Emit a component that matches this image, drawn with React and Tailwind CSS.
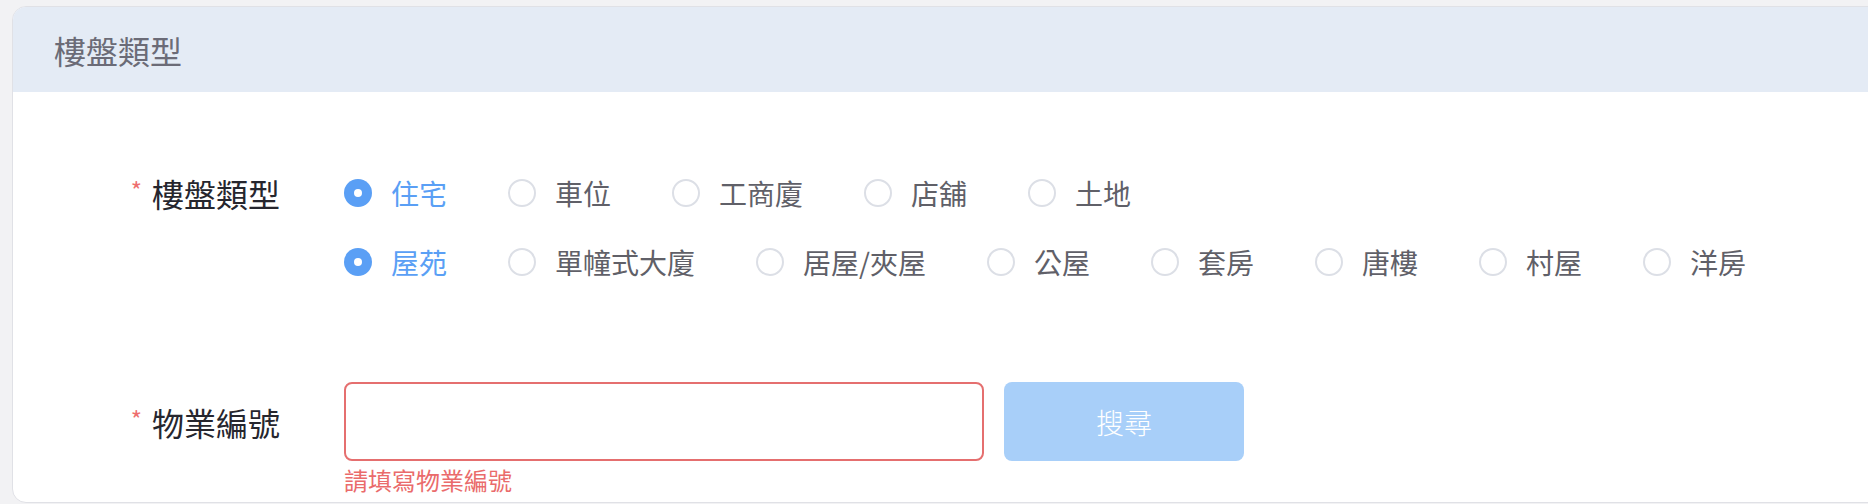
import React from "react";

const row1 = [
  { t: "住宅", c: true },
  { t: "車位" },
  { t: "工商廈" },
  { t: "店舖" },
  { t: "土地" },
];
const row2 = [
  { t: "屋苑", c: true },
  { t: "單幢式大廈" },
  { t: "居屋/夾屋" },
  { t: "公屋" },
  { t: "套房" },
  { t: "唐樓" },
  { t: "村屋" },
  { t: "洋房" },
];

function Radio({ t, c }) {
  return (
    <label className="flex items-center mr-[61px] cursor-pointer">
      {c ? (
        <span className="w-[28px] h-[28px] rounded-full bg-[#5a9ff5] flex items-center justify-center">
          <span className="w-[8px] h-[8px] rounded-full bg-white" />
        </span>
      ) : (
        <span className="w-[28px] h-[28px] rounded-full border-2 border-[#dcdfe6] bg-white" />
      )}
      <span
        className={
          "pl-[19px] text-[28px] leading-none " +
          (c ? "text-[#5a9ff5]" : "text-[#606068]")
        }
      >
        {t}
      </span>
    </label>
  );
}

export default function App() {
  return (
    <div
      className="w-[1868px] h-[504px] bg-[#f2f2f4] overflow-hidden pt-[6px] pl-[12px]"
      style={{ fontFamily: '"Noto Sans CJK TC", "Noto Sans", sans-serif' }}
    >
      <div className="w-[1900px] h-[497px] bg-white border-[1.5px] border-[#e0e1e6] rounded-[14px] overflow-hidden">
        <div className="h-[85px] bg-[#e4ebf5] flex items-center pl-[41px]">
          <span className="text-[32px] text-[#6b6b77] leading-none">樓盤類型</span>
        </div>
        <div className="pt-[66px]">
          <div className="flex">
            <div className="w-[331px] pr-[64px] flex justify-end h-[69px] items-center">
              <span className="text-[#ee6e6e] text-[24px] mr-[10px] leading-none mt-[-6px]">*</span>
              <span className="text-[32px] text-[#26262e] leading-none">樓盤類型</span>
            </div>
            <div className="flex flex-col">
              <div className="flex h-[69px] items-center">
                {row1.map((o) => (
                  <Radio key={o.t} {...o} />
                ))}
              </div>
              <div className="flex h-[69px] items-center">
                {row2.map((o) => (
                  <Radio key={o.t} {...o} />
                ))}
              </div>
            </div>
          </div>
          <div className="flex mt-[86px]">
            <div className="w-[331px] pr-[64px] flex justify-end h-[79px] items-center">
              <span className="text-[#ee6e6e] text-[24px] mr-[10px] leading-none mt-[-6px]">*</span>
              <span className="text-[32px] text-[#26262e] leading-none">物業編號</span>
            </div>
            <div className="flex flex-col">
              <div className="flex items-start">
                <input
                  className="w-[640px] h-[79px] border-2 border-[#e56f6f] rounded-[8px] outline-none px-4 text-[26px]"
                />
                <button className="ml-[20px] w-[240px] h-[79px] bg-[#a8cff9] rounded-[8px] text-white text-[28px] font-light">
                  搜尋
                </button>
              </div>
              <div className="text-[24px] leading-none text-[#ea6b6b] mt-[7px]">請填寫物業編號</div>
            </div>
          </div>
        </div>
      </div>
    </div>
  );
}
